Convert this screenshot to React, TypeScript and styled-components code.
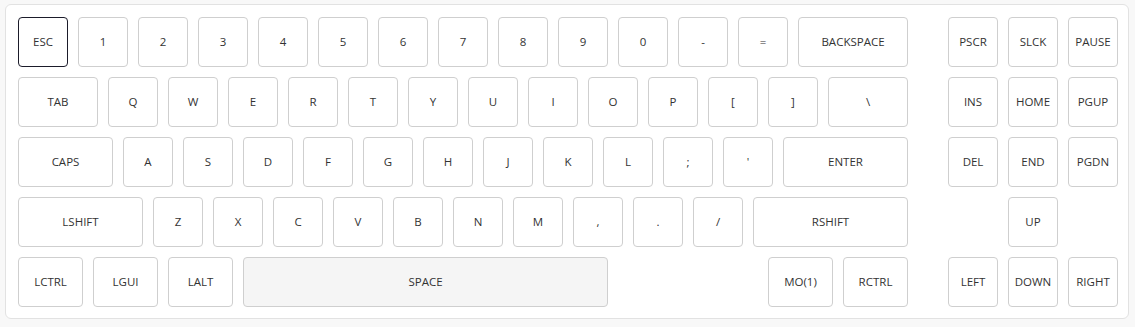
import React from "react";
import styled, { createGlobalStyle } from "styled-components";

const GlobalStyle = createGlobalStyle`
	body {
		margin: 0;
		background: #f8f8f8;
		font-family: "Open Sans", "Liberation Sans", sans-serif;
	}
`;

const UNIT = 60;
const GAP = 10;

const PageSC = styled.div`
	padding: 4px 5px;
`;

const BoardSC = styled.div`
	width: 1124px;
	box-sizing: border-box;
	background: #fff;
	border: 1px solid #e2e2e2;
	border-radius: 6px;
	padding: 12px 12px 11px 12px;
	display: flex;
	gap: 40px;
`;

const BlockSC = styled.div`
	display: flex;
	flex-direction: column;
	gap: ${GAP}px;
`;

const RowSC = styled.div`
	display: flex;
	gap: ${GAP}px;
`;

const KeySC = styled.div<{ $w: number; $active?: boolean; $shade?: boolean }>`
	width: ${(p) => p.$w * UNIT - GAP}px;
	height: 50px;
	box-sizing: border-box;
	flex: none;
	display: flex;
	align-items: center;
	justify-content: center;
	border: 1px solid ${(p) => (p.$active ? "#1b1b2a" : "#cfcfcf")};
	border-radius: 4px;
	background: ${(p) => (p.$shade ? "#f5f5f5" : "#fff")};
	color: #333;
	font-size: 11.5px;
	line-height: 1;
`;

const SpacerSC = styled.div<{ $w: number }>`
	width: ${(p) => p.$w * UNIT - GAP}px;
	height: 50px;
	flex: none;
`;

type KeyDef = [string, number?] | number;

const main: KeyDef[][] = [
	[["ESC"], ["1"], ["2"], ["3"], ["4"], ["5"], ["6"], ["7"], ["8"], ["9"], ["0"], ["-"], ["="], ["BACKSPACE", 2]],
	[["TAB", 1.5], ["Q"], ["W"], ["E"], ["R"], ["T"], ["Y"], ["U"], ["I"], ["O"], ["P"], ["["], ["]"], ["\\", 1.5]],
	[["CAPS", 1.75], ["A"], ["S"], ["D"], ["F"], ["G"], ["H"], ["J"], ["K"], ["L"], [";"], ["'"], ["ENTER", 2.25]],
	[["LSHIFT", 2.25], ["Z"], ["X"], ["C"], ["V"], ["B"], ["N"], ["M"], [","], ["."], ["/"], ["RSHIFT", 2.75]],
	[["LCTRL", 1.25], ["LGUI", 1.25], ["LALT", 1.25], ["SPACE", 6.25], 2.5, ["MO(1)", 1.25], ["RCTRL", 1.25]],
];

const nav: KeyDef[][] = [
	[["PSCR"], ["SLCK"], ["PAUSE"]],
	[["INS"], ["HOME"], ["PGUP"]],
	[["DEL"], ["END"], ["PGDN"]],
	[1, ["UP"], 1],
	[["LEFT"], ["DOWN"], ["RIGHT"]],
];

// a number in a row is an empty gap of that many units
const renderRows = (rows: KeyDef[][]) =>
	rows.map((row, r) => (
		<RowSC key={r}>
			{row.map((k, i) =>
				typeof k === "number" ? (
					<SpacerSC key={i} $w={k} />
				) : (
					<KeySC
						key={i}
						$w={k[1] ?? 1}
						$active={k[0] === "ESC"}
						$shade={k[0] === "SPACE"}
					>
						{k[0]}
					</KeySC>
				)
			)}
		</RowSC>
	));

const App = () => (
	<PageSC>
		<GlobalStyle />
		<BoardSC>
			<BlockSC>{renderRows(main)}</BlockSC>
			<BlockSC>{renderRows(nav)}</BlockSC>
		</BoardSC>
	</PageSC>
);

export default App;
